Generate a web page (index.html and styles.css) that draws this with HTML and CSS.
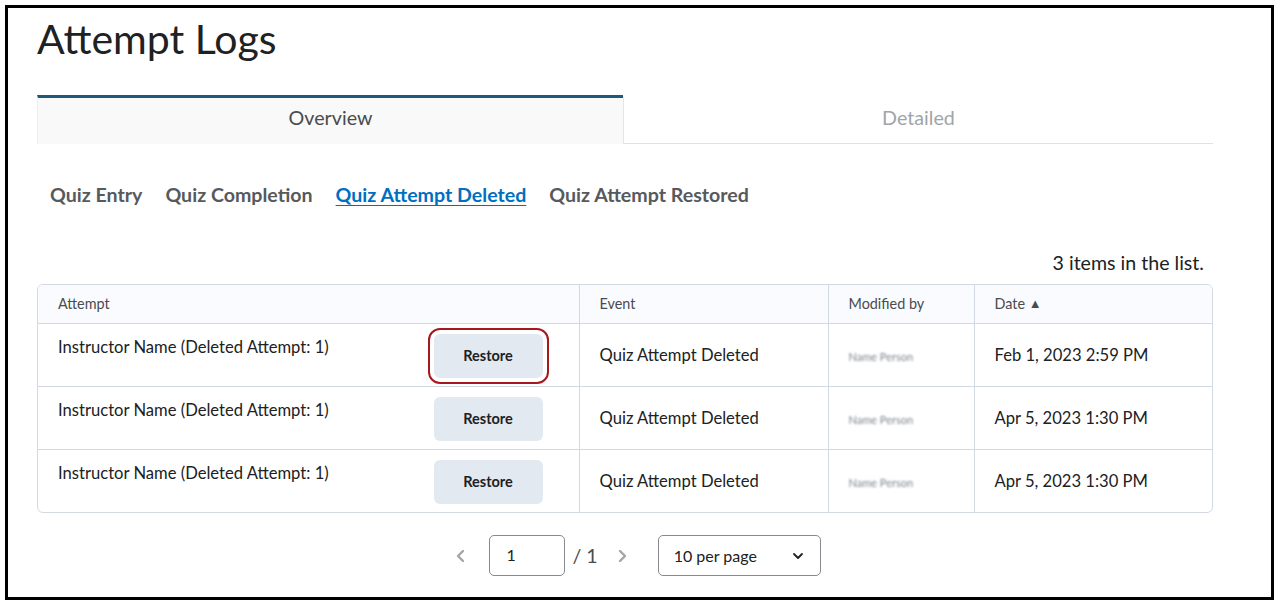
FILE: index.html
```html
<!DOCTYPE html>
<html lang="en">
<head>
    <meta charset="UTF-8">
    <meta name="viewport" content="width=device-width, initial-scale=1.0">
    <title>Attempt Logs</title>
    <link rel="stylesheet" href="styles.css">
</head>
<body>
    <div class="frame">
        <h1 class="page-title">Attempt Logs</h1>

        <div class="tabs">
            <div class="tab selected">Overview</div>
            <div class="tab">Detailed</div>
        </div>

        <div class="subtabs">
            <a class="subtab">Quiz Entry</a>
            <a class="subtab">Quiz Completion</a>
            <a class="subtab active">Quiz Attempt Deleted</a>
            <a class="subtab">Quiz Attempt Restored</a>
        </div>

        <div class="count">3 items in the list.</div>

        <div class="table-wrap">
            <table class="logs">
                <thead>
                    <tr>
                        <th class="col-attempt">Attempt</th>
                        <th class="col-event">Event</th>
                        <th class="col-mod">Modified by</th>
                        <th class="col-date">Date <span class="sort">&#9650;</span></th>
                    </tr>
                </thead>
                <tbody>
                    <tr>
                        <td class="attempt-cell">
                            <div class="attempt">
                                <span>Instructor Name (Deleted Attempt: 1)</span>
                                <button class="restore focus">Restore</button>
                            </div>
                        </td>
                        <td>Quiz Attempt Deleted</td>
                        <td><span class="blurred">Name Person</span></td>
                        <td>Feb 1, 2023 2:59 PM</td>
                    </tr>
                    <tr>
                        <td class="attempt-cell">
                            <div class="attempt">
                                <span>Instructor Name (Deleted Attempt: 1)</span>
                                <button class="restore">Restore</button>
                            </div>
                        </td>
                        <td>Quiz Attempt Deleted</td>
                        <td><span class="blurred">Name Person</span></td>
                        <td>Apr 5, 2023 1:30 PM</td>
                    </tr>
                    <tr>
                        <td class="attempt-cell">
                            <div class="attempt">
                                <span>Instructor Name (Deleted Attempt: 1)</span>
                                <button class="restore">Restore</button>
                            </div>
                        </td>
                        <td>Quiz Attempt Deleted</td>
                        <td><span class="blurred">Name Person</span></td>
                        <td>Apr 5, 2023 1:30 PM</td>
                    </tr>
                </tbody>
            </table>
        </div>

        <div class="pager">
            <svg class="chev" width="12" height="16" viewBox="0 0 12 16"><polyline points="8,3 3,8 8,13" fill="none" stroke="#a3a6a9" stroke-width="2.4" stroke-linecap="round" stroke-linejoin="round"/></svg>
            <div class="page-box">1</div>
            <span class="page-total">/ 1</span>
            <svg class="chev" width="12" height="16" viewBox="0 0 12 16"><polyline points="4,3 9,8 4,13" fill="none" stroke="#a3a6a9" stroke-width="2.4" stroke-linecap="round" stroke-linejoin="round"/></svg>
            <div class="per-page">
                <span>10 per page</span>
                <svg width="12" height="8" viewBox="0 0 12 8"><polyline points="2,2 6,6 10,2" fill="none" stroke="#202122" stroke-width="1.8" stroke-linecap="round" stroke-linejoin="round"/></svg>
            </div>
        </div>
    </div>
</body>
</html>
```

FILE: styles.css
```css
body {
    margin: 0;
    padding: 0;
    background-color: #fff;
    font-family: Lato, "Noto Sans", sans-serif;
    color: #202122;
}

.frame {
    margin: 5px;
    width: 1176px;
    height: 583px;
    border: 3px solid #000;
    padding: 6px 58px 0 29px;
}

.page-title {
    margin: 0;
    padding-top: 1px;
    font-size: 41px;
    line-height: 48px;
    font-weight: 400;
    color: #202122;
}

.tabs {
    display: flex;
    margin-top: 32px;
}

.tab {
    flex: 1;
    box-sizing: border-box;
    height: 49px;
    line-height: 40px;
    text-align: center;
    font-size: 19.7px;
    color: #a1a4a7;
    border-top: 3px solid transparent;
    border-bottom: 1px solid #dfe1e3;
    border-left: 1px solid #e3e5e7;
}

.tab.selected {
    flex: 0 0 586px;
    color: #494c4e;
    background-color: #f9f9f9;
    border-top-color: #1f5a7a;
    border-bottom-color: transparent;
    border-left: 1px solid #eeeeee;
}

.subtabs {
    display: flex;
    gap: 23px;
    margin-top: 39px;
    padding-left: 13px;
    font-size: 19.6px;
    line-height: 24px;
    font-weight: 700;
}

.subtab {
    color: #565a5c;
}

.subtab.active {
    color: #006fbf;
    text-decoration: underline;
    text-underline-offset: 3px;
}

.count {
    margin-top: 44px;
    text-align: right;
    padding-right: 9px;
    font-size: 19.6px;
    line-height: 24px;
    color: #202122;
}

.table-wrap {
    margin-top: 9px;
    border: 1px solid #d3d9e3;
    border-radius: 6px;
    overflow: hidden;
}

.logs {
    width: 100%;
    border-collapse: collapse;
    table-layout: fixed;
}

.logs th {
    box-sizing: border-box;
    background-color: #f9fbff;
    font-size: 14.4px;
    font-weight: 400;
    color: #494c4e;
    text-align: left;
    height: 38px;
    padding: 0 20px;
    border-bottom: 1px solid #d3d9e3;
    border-left: 1px solid #d3d9e3;
}

.logs td {
    font-size: 16.6px;
    color: #202122;
    height: 63px;
    padding: 0 20px;
    box-sizing: border-box;
    border-top: 1px solid #d3d9e3;
    border-left: 1px solid #d3d9e3;
    vertical-align: middle;
}

.logs th:first-child,
.logs td:first-child {
    border-left: none;
}

.logs tbody tr:first-child td {
    border-top: none;
}

.col-attempt { width: 541px; }
.col-event { width: 249px; }
.col-mod { width: 146px; }

.sort {
    font-size: 13px;
    position: relative;
    top: -1px;
}

.logs td.attempt-cell {
    vertical-align: top;
    padding: 10px 36px 0 20px;
}

.attempt {
    display: flex;
    justify-content: space-between;
    align-items: flex-start;
}

.attempt span {
    line-height: 24px;
    padding-top: 1px;
}

.restore {
    width: 109px;
    height: 44px;
    border: none;
    border-radius: 6px;
    background-color: #e3e9f1;
    font-family: Lato, "Noto Sans", sans-serif;
    font-size: 14.5px;
    font-weight: 700;
    color: #202122;
    padding-top: 0;
}

.restore.focus {
    outline: 2px solid #a7181e;
    outline-offset: 4px;
}

.blurred {
    font-size: 11px;
    color: #7d848b;
    filter: blur(1.3px);
}

.pager {
    display: flex;
    align-items: center;
    justify-content: center;
    margin-top: 22px;
    padding-left: 18px;
}

.chev {
    margin: 0 8px;
}

.page-box {
    width: 58px;
    height: 39px;
    border: 1px solid #868a8e;
    border-radius: 5px;
    padding-left: 16px;
    line-height: 38px;
    font-size: 16px;
    margin-left: 14px;
}

.page-total {
    font-size: 19.6px;
    color: #494c4e;
    margin: 0 10px 0 7px;
}

.per-page {
    display: flex;
    align-items: center;
    justify-content: space-between;
    width: 130px;
    height: 39px;
    border: 1px solid #868a8e;
    border-radius: 5px;
    padding: 0 16px 0 15px;
    margin-left: 22px;
    font-size: 16px;
}
```
